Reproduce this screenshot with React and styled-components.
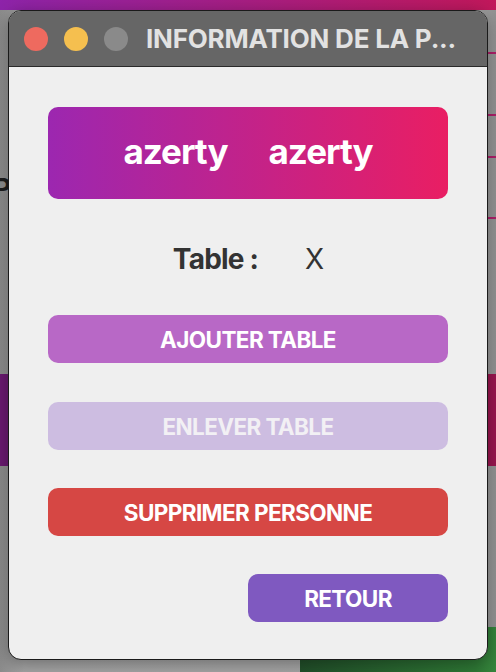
import React from "react";
import styled, { createGlobalStyle } from "styled-components";

const GlobalStyle = createGlobalStyle`
  html, body {
    margin: 0;
    padding: 0;
    width: 496px;
    height: 672px;
    overflow: hidden;
    font-family: Inter, "Noto Sans", sans-serif;
  }
`;

const Backdrop = styled.div`
  position: relative;
  width: 496px;
  height: 672px;
  background: linear-gradient(90deg, #8c8c8c 0%, #a6a6a6 5%, #a8a8a8 95%, #939393 100%);
  overflow: hidden;
`;

/* blurred app behind the dialog */
const TopStrip = styled.div`
  position: absolute;
  left: 0;
  top: 0;
  width: 100%;
  height: 10px;
  background: linear-gradient(90deg, #8e24aa, #c2185b);
`;

const SideBand = styled.div`
  position: absolute;
  top: 374px;
  height: 92px;
  width: 20px;
  ${(p) => (p.$right ? "right: 0;" : "left: 0;")}
  background: ${(p) => (p.$right ? "#9c1650" : "#6c1a72")};
`;

const SideLine = styled.div`
  position: absolute;
  right: 0;
  width: 20px;
  height: 2px;
  top: ${(p) => p.$top}px;
  background: #b0206a;
`;

const GhostText = styled.span`
  position: absolute;
  left: -6px;
  top: 172px;
  font-size: 26px;
  font-weight: 700;
  color: #1e1e1e;
`;

const GreenBlock = styled.div`
  position: absolute;
  left: 300px;
  top: 627px;
  width: 220px;
  height: 70px;
  border-radius: 10px;
  background: linear-gradient(90deg, #22502a, #2f7a36 80%, #3e9444);
`;

const Window = styled.div`
  position: absolute;
  left: 8px;
  top: 10px;
  width: 478px;
  height: 648px;
  border: 1px solid #1a1a1a;
  border-radius: 13px;
  background: #efefef;
  overflow: hidden;
  display: flex;
  flex-direction: column;
  box-shadow: 0 4px 18px rgba(0, 0, 0, 0.35);
`;

const TitleBar = styled.div`
  height: 55px;
  flex-shrink: 0;
  background: #666666;
  border-bottom: 1px solid #2a2a2a;
  display: flex;
  align-items: center;
  padding-left: 15px;
  gap: 16px;
`;

const Light = styled.span`
  width: 24px;
  height: 24px;
  border-radius: 50%;
  flex-shrink: 0;
  background: ${(p) => p.$color};
`;

const Title = styled.div`
  margin-left: 2px;
  color: #e2e2e2;
  font-size: 26px;
  font-weight: 700;
  letter-spacing: -0.2px;
  white-space: nowrap;
`;

const Content = styled.div`
  flex: 1;
  display: flex;
  flex-direction: column;
  padding: 40px 39px 0 39px;
`;

const Banner = styled.div`
  height: 92px;
  border-radius: 10px;
  background: linear-gradient(90deg, #9c27b0 0%, #e91e63 100%);
  display: flex;
  align-items: center;
  justify-content: center;
  gap: 41px;
  color: #ffffff;
  font-size: 35px;
  font-weight: 700;
  letter-spacing: -1px;
  padding-bottom: 4px;
  box-sizing: border-box;
`;

const TableRow = styled.div`
  display: flex;
  justify-content: center;
  align-items: center;
  gap: 47px;
  margin-top: 42px;
  height: 36px;
  color: #333333;
  font-size: 28px;
  padding-left: 1px;
`;

const Label = styled.span`
  font-weight: 700;
  letter-spacing: -0.8px;
`;

const Value = styled.span`
  font-weight: 400;
`;

const Button = styled.button`
  height: 48px;
  width: ${(p) => (p.$half ? "200px" : "100%")};
  align-self: ${(p) => (p.$half ? "flex-end" : "stretch")};
  margin-top: ${(p) => p.$gap}px;
  border: none;
  border-radius: 10px;
  background: ${(p) => p.$bg};
  color: ${(p) => p.$fg || "#ffffff"};
  font-family: Inter, "Noto Sans", sans-serif;
  font-size: 22.5px;
  font-weight: 700;
  letter-spacing: -0.6px;
  cursor: pointer;
`;

export default function App() {
  return (
    <>
      <GlobalStyle />
      <Backdrop>
        <TopStrip />
        <GhostText>P</GhostText>
        <SideBand />
        <SideBand $right />
        <SideLine $top={52} />
        <SideLine $top={114} />
        <SideLine $top={156} />
        <SideLine $top={217} />
        <GreenBlock />
        <Window>
          <TitleBar>
            <Light $color="#ee6a5f" />
            <Light $color="#f5bf4f" />
            <Light $color="#8a8a8a" />
            <Title>INFORMATION DE LA P...</Title>
          </TitleBar>
          <Content>
            <Banner>
              <span>azerty</span>
              <span>azerty</span>
            </Banner>
            <TableRow>
              <Label>Table :</Label>
              <Value>X</Value>
            </TableRow>
            <Button $gap={38} $bg="#b868c6">AJOUTER TABLE</Button>
            <Button $gap={39} $bg="#cdbde1" $fg="#f2f0f4">ENLEVER TABLE</Button>
            <Button $gap={38} $bg="#d64744">SUPPRIMER PERSONNE</Button>
            <Button $gap={38} $bg="#7f59c0" $half>RETOUR</Button>
          </Content>
        </Window>
      </Backdrop>
    </>
  );
}
